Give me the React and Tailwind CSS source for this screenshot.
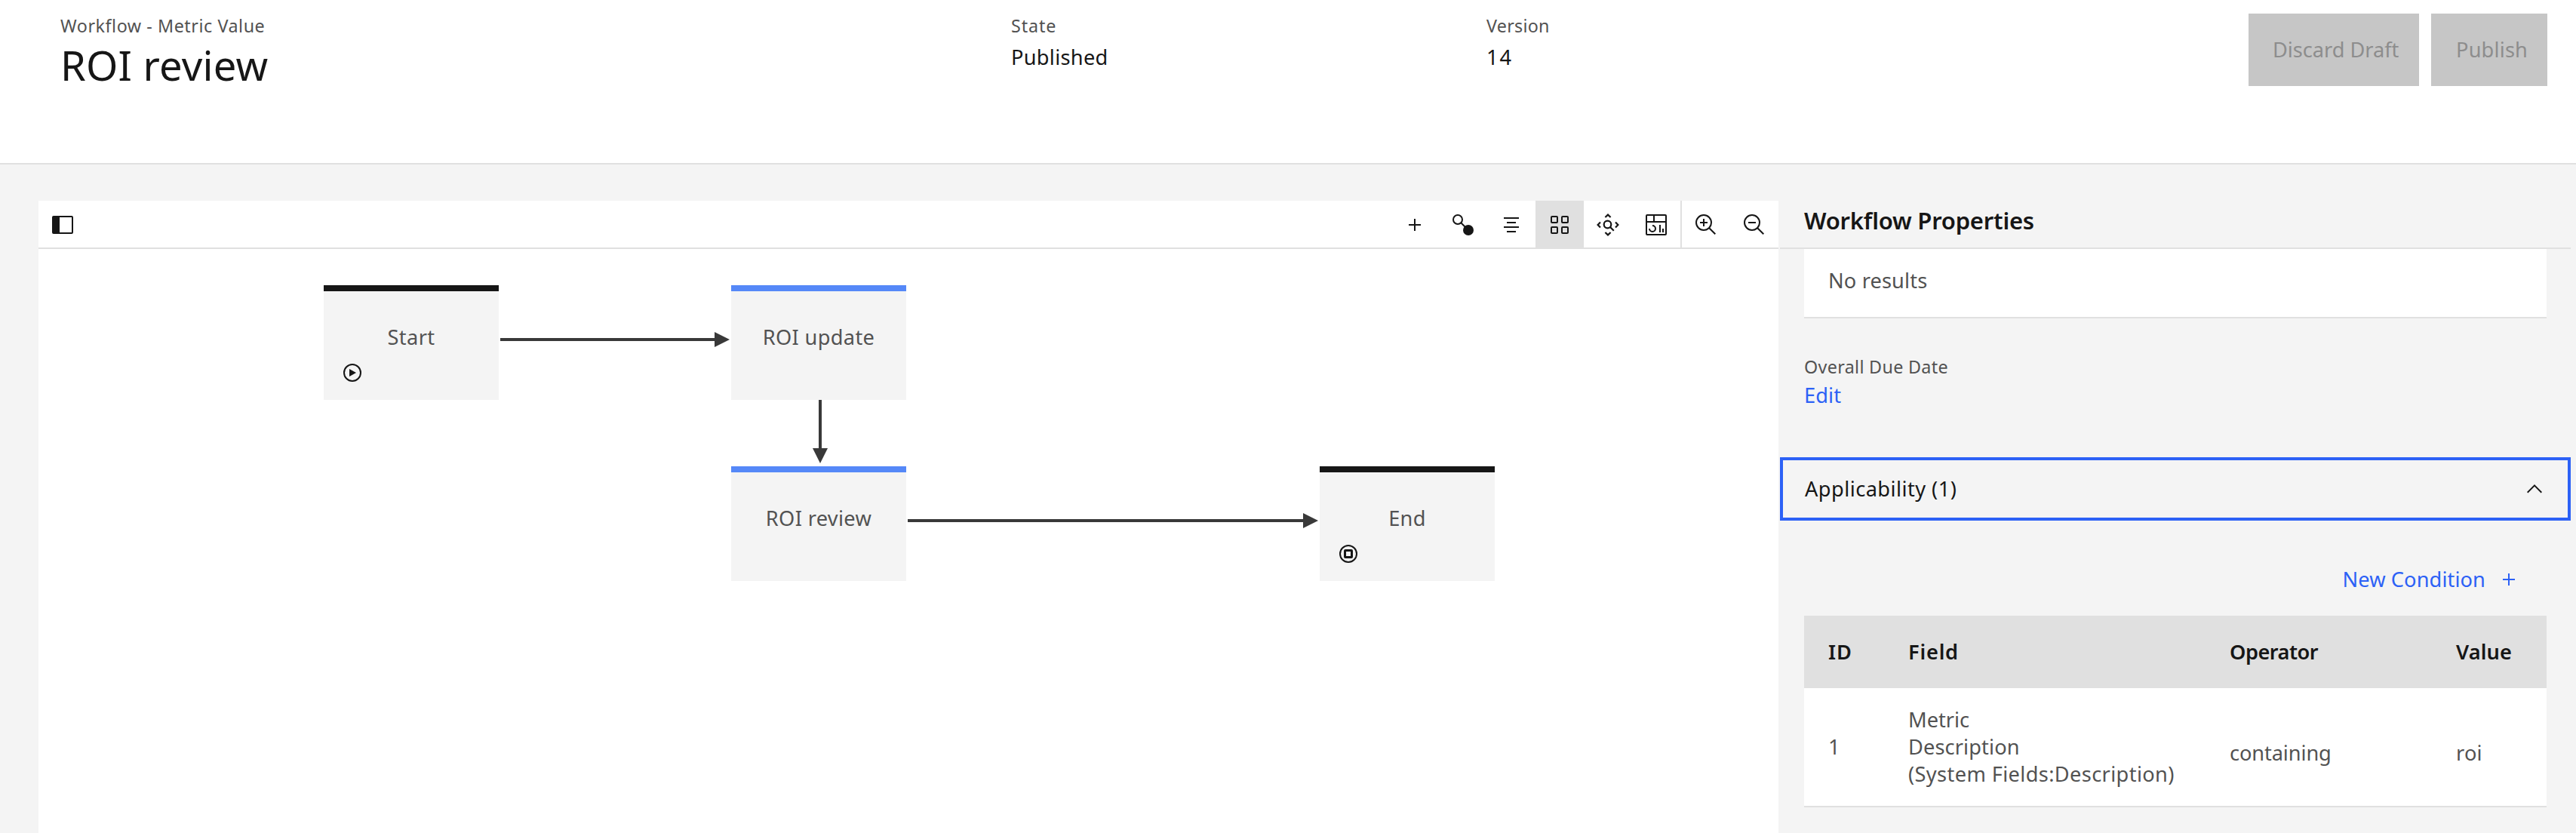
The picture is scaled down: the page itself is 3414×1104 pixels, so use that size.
import React from "react";

const BODY = "text-[27.2px] leading-[37px] whitespace-nowrap";
const LABEL = "text-[23.3px] leading-[32px] whitespace-nowrap text-[#525252]";

function Icon({ children, className = "size-8" }) {
  return (
    <svg viewBox="0 0 32 32" className={className} fill="currentColor" aria-hidden="true">
      {children}
    </svg>
  );
}

const icons = {
  panel: <path d="M28 4H4a2 2 0 0 0-2 2v20a2 2 0 0 0 2 2h24a2 2 0 0 0 2-2V6a2 2 0 0 0-2-2Zm0 22H12V6h16Z" />,
  add: <path d="M17 15V8h-2v7H8v2h7v7h2v-7h7v-2z" />,
  connect: (
    <>
      <circle cx="9" cy="9" r="6" fill="none" stroke="currentColor" strokeWidth="2" />
      <path d="M13 13l6 6" stroke="currentColor" strokeWidth="2" />
      <circle cx="23" cy="23" r="7" />
    </>
  ),
  align: <path d="M6 6h20v2H6zM10 12h12v2H10zM6 18h20v2H6zM10 24h12v2H10z" />,
  grid: (
    <g fill="none" stroke="currentColor" strokeWidth="2">
      <rect x="5" y="5" width="8" height="8" rx="1" />
      <rect x="19" y="5" width="8" height="8" rx="1" />
      <rect x="5" y="19" width="8" height="8" rx="1" />
      <rect x="19" y="19" width="8" height="8" rx="1" />
    </g>
  ),
  fit: (
    <g fill="none" stroke="currentColor" strokeWidth="2.2">
      <circle cx="15.5" cy="15.5" r="4.8" />
      <path d="M19 19l4.8 4.8" />
      <path d="M12.4 6L16 2.6 19.6 6M12.4 26l3.6 3.4 3.6-3.4M6 12.4L2.6 16 6 19.6M26 12.4l3.4 3.6-3.4 3.6" />
    </g>
  ),
  dashboard: (
    <>
      <path d="M24 21h2v5h-2zM20 16h2v10h-2zM11 26a5 5 0 0 1-5-5h2a3 3 0 1 0 3-3v-2a5 5 0 0 1 0 10z" />
      <path d="M28 2H4a2 2 0 0 0-2 2v24a2 2 0 0 0 2 2h24a2 2 0 0 0 2-2V4a2 2 0 0 0-2-2Zm0 9H14V4h14ZM12 4v7H4V4ZM4 28V13h24v15Z" />
    </>
  ),
  zoomIn: (
    <>
      <path d="M18 12h-4V8h-2v4H8v2h4v4h2v-4h4z" />
      <path d="M21.448 20A10.856 10.856 0 0 0 24 13a11 11 0 1 0-11 11 10.856 10.856 0 0 0 7-2.552L27.586 29 29 27.586ZM13 22a9 9 0 1 1 9-9 9.01 9.01 0 0 1-9 9Z" />
    </>
  ),
  zoomOut: (
    <>
      <path d="M8 12h10v2H8z" />
      <path d="M21.448 20A10.856 10.856 0 0 0 24 13a11 11 0 1 0-11 11 10.856 10.856 0 0 0 7-2.552L27.586 29 29 27.586ZM13 22a9 9 0 1 1 9-9 9.01 9.01 0 0 1-9 9Z" />
    </>
  ),
  chevronUp: <path d="M16 10l10 10-1.4 1.4L16 12.8l-8.6 8.6L6 20z" />,
  start: (
    <>
      <circle cx="16" cy="16" r="11" fill="none" stroke="currentColor" strokeWidth="2" />
      <path d="M12 11v10l9-5z" />
    </>
  ),
  end: (
    <>
      <circle cx="16" cy="16" r="11" fill="none" stroke="currentColor" strokeWidth="2" />
      <rect x="11.5" y="11.5" width="9" height="9" rx="0.5" fill="none" stroke="currentColor" strokeWidth="3" />
    </>
  ),
};

function ToolButton({ icon, className = "" }) {
  return (
    <button className={`flex h-[62px] w-16 justify-center pt-4 ${className}`}>
      <Icon>{icons[icon]}</Icon>
    </button>
  );
}

function Header() {
  return (
    <header className="flex h-[218px] border-b-2 border-[#e0e0e0] bg-white pt-[18px] pr-[38px] pl-20">
      <div className="w-[1260px]">
        <div className={`${LABEL} tracking-[0.55px]`}>Workflow - Metric Value</div>
        <h1 className="text-[54.3px] leading-[72px] tracking-[0.2px] whitespace-nowrap">ROI review</h1>
      </div>
      <div className="w-[630px]">
        <div className={`${LABEL} tracking-[0.9px]`}>State</div>
        <div className={`${BODY} mt-[7px] tracking-[0.3px]`}>Published</div>
      </div>
      <div>
        <div className={`${LABEL} tracking-[0.26px]`}>Version</div>
        <div className={`${BODY} mt-[7px] tracking-[2px]`}>14</div>
      </div>
      <div className="ml-auto flex gap-4 text-[#8d8d8d]">
        <button className={`${BODY} flex h-24 w-[226px] bg-[#c6c6c6] pt-[29px] pl-8 tracking-[-0.02px]`}>Discard Draft</button>
        <button className={`${BODY} flex h-24 w-[154px] bg-[#c6c6c6] pt-[29px] pl-[33px] tracking-[0.18px]`}>Publish</button>
      </div>
    </header>
  );
}

function Node({ label, place, bar, icon }) {
  return (
    <div className={`absolute h-[152px] w-[232px] border-t-8 bg-[#f4f4f4] pt-[42px] ${place} ${bar}`}>
      <div className={`${BODY} text-center tracking-[0.35px] text-[#525252]`}>{label}</div>
      {icon && <Icon className="mt-[13px] ml-[22px] size-8">{icons[icon]}</Icon>}
    </div>
  );
}

function Canvas() {
  return (
    <section className="flex w-[2306px] flex-col bg-white">
      <div className="flex h-16 border-b-2 border-[#e0e0e0]">
        <button className="flex pt-4 pl-4">
          <Icon>{icons.panel}</Icon>
        </button>
        <div className="ml-auto flex">
          <ToolButton icon="add" />
          <ToolButton icon="connect" />
          <ToolButton icon="align" />
          <ToolButton icon="grid" className="bg-[#e0e0e0]" />
          <ToolButton icon="fit" />
          <ToolButton icon="dashboard" />
          <div className="h-[62px] w-0.5 bg-[#e0e0e0]" />
          <ToolButton icon="zoomIn" />
          <ToolButton icon="zoomOut" />
        </div>
      </div>
      <div className="relative flex-1">
        <svg className="absolute inset-0" width="2306" height="774" viewBox="0 0 2306 774" fill="#393939">
          <path d="M612 118h284v4H612zM896 110v20l20-10z" />
          <path d="M1034 200h4v65h-4zM1026 264h20l-10 20z" />
          <path d="M1152 358h524v4h-524zM1676 350v20l20-10z" />
        </svg>
        <Node label="Start" place="left-[378px] top-12" bar="border-[#161616]" icon="start" />
        <Node label="ROI update" place="left-[918px] top-12" bar="border-[#5588f8]" />
        <Node label="ROI review" place="left-[918px] top-72" bar="border-[#5588f8]" />
        <Node label="End" place="left-[1698px] top-72" bar="border-[#161616]" icon="end" />
      </div>
    </section>
  );
}

const COLUMNS = "grid grid-cols-[138px_426px_300px_120px]";

function Properties() {
  return (
    <aside className="ml-0.5 w-[1048px]">
      <h2 className="h-16 border-b-2 border-[#e0e0e0] pt-[5px] pl-8 text-[31px] leading-[42px] font-semibold tracking-[-0.22px]">
        Workflow Properties
      </h2>
      <div className={`${BODY} mx-8 h-[92px] border-b-2 border-[#e0e0e0] bg-white pt-[23px] pl-8 tracking-[0.15px] text-[#525252]`}>
        No results
      </div>
      <div className={`${LABEL} mt-12 pl-8 tracking-[0.33px]`}>Overall Due Date</div>
      <div className={`${BODY} mt-[3px] pl-8 tracking-[0.1px] text-[#2c61f6]`}>Edit</div>
      <button className="mt-16 flex h-[84px] w-full justify-between border-4 border-[#2c61f6] pt-[19px] pr-7 pl-7">
        <span className={`${BODY} pl-px tracking-[0.46px]`}>Applicability (1)</span>
        <Icon className="mt-[3px] size-8">{icons.chevronUp}</Icon>
      </button>
      <div className="mt-[59px] flex justify-end pr-[66px] text-[#2c61f6]">
        <span className={`${BODY} tracking-[0.1px]`}>New Condition</span>
        <Icon className="mt-[3px] ml-[15px] size-8">{icons.add}</Icon>
      </div>
      <div className="mx-8 mt-[30px]">
        <div className={`${BODY} ${COLUMNS} h-24 bg-[#e0e0e0] pt-[29px] font-semibold`}>
          <div className="pl-8 tracking-[0.9px]">ID</div>
          <div className="tracking-[0.8px]">Field</div>
          <div className="tracking-[-0.5px]">Operator</div>
          <div className="tracking-[0.1px]">Value</div>
        </div>
        <div className={`${BODY} ${COLUMNS} h-[158px] border-b-2 border-[#e0e0e0] bg-white text-[#525252]`}>
          <div className="pt-[59px] pl-8">1</div>
          <div className="pt-[23px]">
            <div className="h-9">Metric</div>
            <div className="h-9 tracking-[0.12px]">Description</div>
            <div className="h-9 tracking-[0.38px]">(System Fields:Description)</div>
          </div>
          <div className="pt-[67px] tracking-[-0.1px]">containing</div>
          <div className="pt-[67px] tracking-[0.2px]">roi</div>
        </div>
      </div>
    </aside>
  );
}

export default function App() {
  return (
    <div className="flex h-[1104px] w-[3414px] flex-col overflow-hidden bg-[#f4f4f4] font-['Noto_Sans',sans-serif] text-[#161616]">
      <Header />
      <main className="flex flex-1 pt-12 pl-[51px]">
        <Canvas />
        <Properties />
      </main>
    </div>
  );
}
